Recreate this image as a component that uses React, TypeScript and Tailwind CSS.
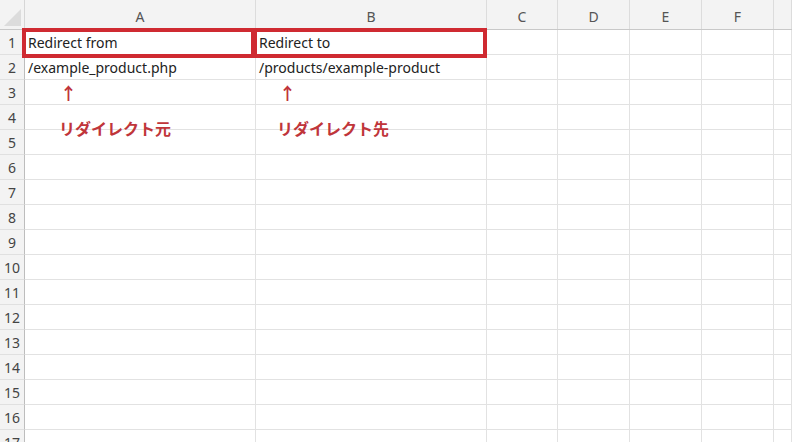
import type { ReactNode } from 'react';

const COLS = [
  { name: 'A', w: 'w-[231px]' },
  { name: 'B', w: 'w-[231px]' },
  { name: 'C', w: 'w-[71px]' },
  { name: 'D', w: 'w-[72px]' },
  { name: 'E', w: 'w-[72px]' },
  { name: 'F', w: 'w-[72px]' },
  { name: '', w: 'flex-1' },
];

function Arrow({ className }: { className: string }) {
  return <span className={`${className} mt-[3px] text-[17px] font-bold text-[#c0353a] leading-none`}>↑</span>;
}

function Note({ className, children }: { className: string; children: ReactNode }) {
  return (
    <span className={`${className} mt-[23px] text-[16px] font-bold text-[#c0353a] leading-none`}>{children}</span>
  );
}

const CELLS: Record<string, ReactNode> = {
  '1-0': 'Redirect from',
  '1-1': 'Redirect to',
  '2-0': '/example_product.php',
  '2-1': '/products/example-product',
  '3-0': <Arrow className="pl-[32px]" />,
  '3-1': <Arrow className="pl-[20px]" />,
  '4-0': <Note className="pl-[31px]">リダイレクト元</Note>,
  '4-1': <Note className="pl-[18px]">リダイレクト先</Note>,
};

const ROWS = Array.from({ length: 17 }, (_, i) => i + 1);

export default function App() {
  return (
    <div className="relative w-[792px] h-[442px] overflow-hidden bg-white font-['Noto_Sans','Noto_Sans_CJK_JP',sans-serif] text-[14px] text-[#222]">
      {/* column header */}
      <div className="flex h-[30px] bg-[#f3f3f3] border-b border-[#c8c8c8]">
        <div className="relative w-[25px] shrink-0 border-r border-[#d6d6d6]">
          <div className="absolute right-[3px] bottom-[3px] w-0 h-0 border-l-[17px] border-l-transparent border-b-[17px] border-b-[#dcdcdc]" />
        </div>
        {COLS.map((c, i) => (
          <div
            key={i}
            className={`${c.w} shrink-0 flex items-center justify-center border-r border-[#dcdcdc] text-[#555] pt-[3px]`}
          >
            {c.name}
          </div>
        ))}
      </div>

      {/* rows */}
      {ROWS.map((r) => (
        <div key={r} className="flex h-[25px]">
          <div className="w-[25px] shrink-0 bg-[#f3f3f3] border-r border-[#bdbdbd] border-b border-b-[#e0e0e0] flex items-center justify-center text-[#444] text-[14px]">
            {r}
          </div>
          {COLS.map((c, i) => (
            <div
              key={i}
              className={`${c.w} shrink-0 border-r border-b border-[#e2e2e2] flex items-center pl-[3px] whitespace-nowrap overflow-visible`}
            >
              {CELLS[`${r}-${i}`]}
            </div>
          ))}
        </div>
      ))}

      {/* red highlight boxes */}
      <div className="absolute left-[22px] top-[28px] w-[233px] h-[30px] border-[4px] border-[#cf2a31]" />
      <div className="absolute left-[253px] top-[28px] w-[234px] h-[30px] border-[4px] border-[#cf2a31]" />
    </div>
  );
}
